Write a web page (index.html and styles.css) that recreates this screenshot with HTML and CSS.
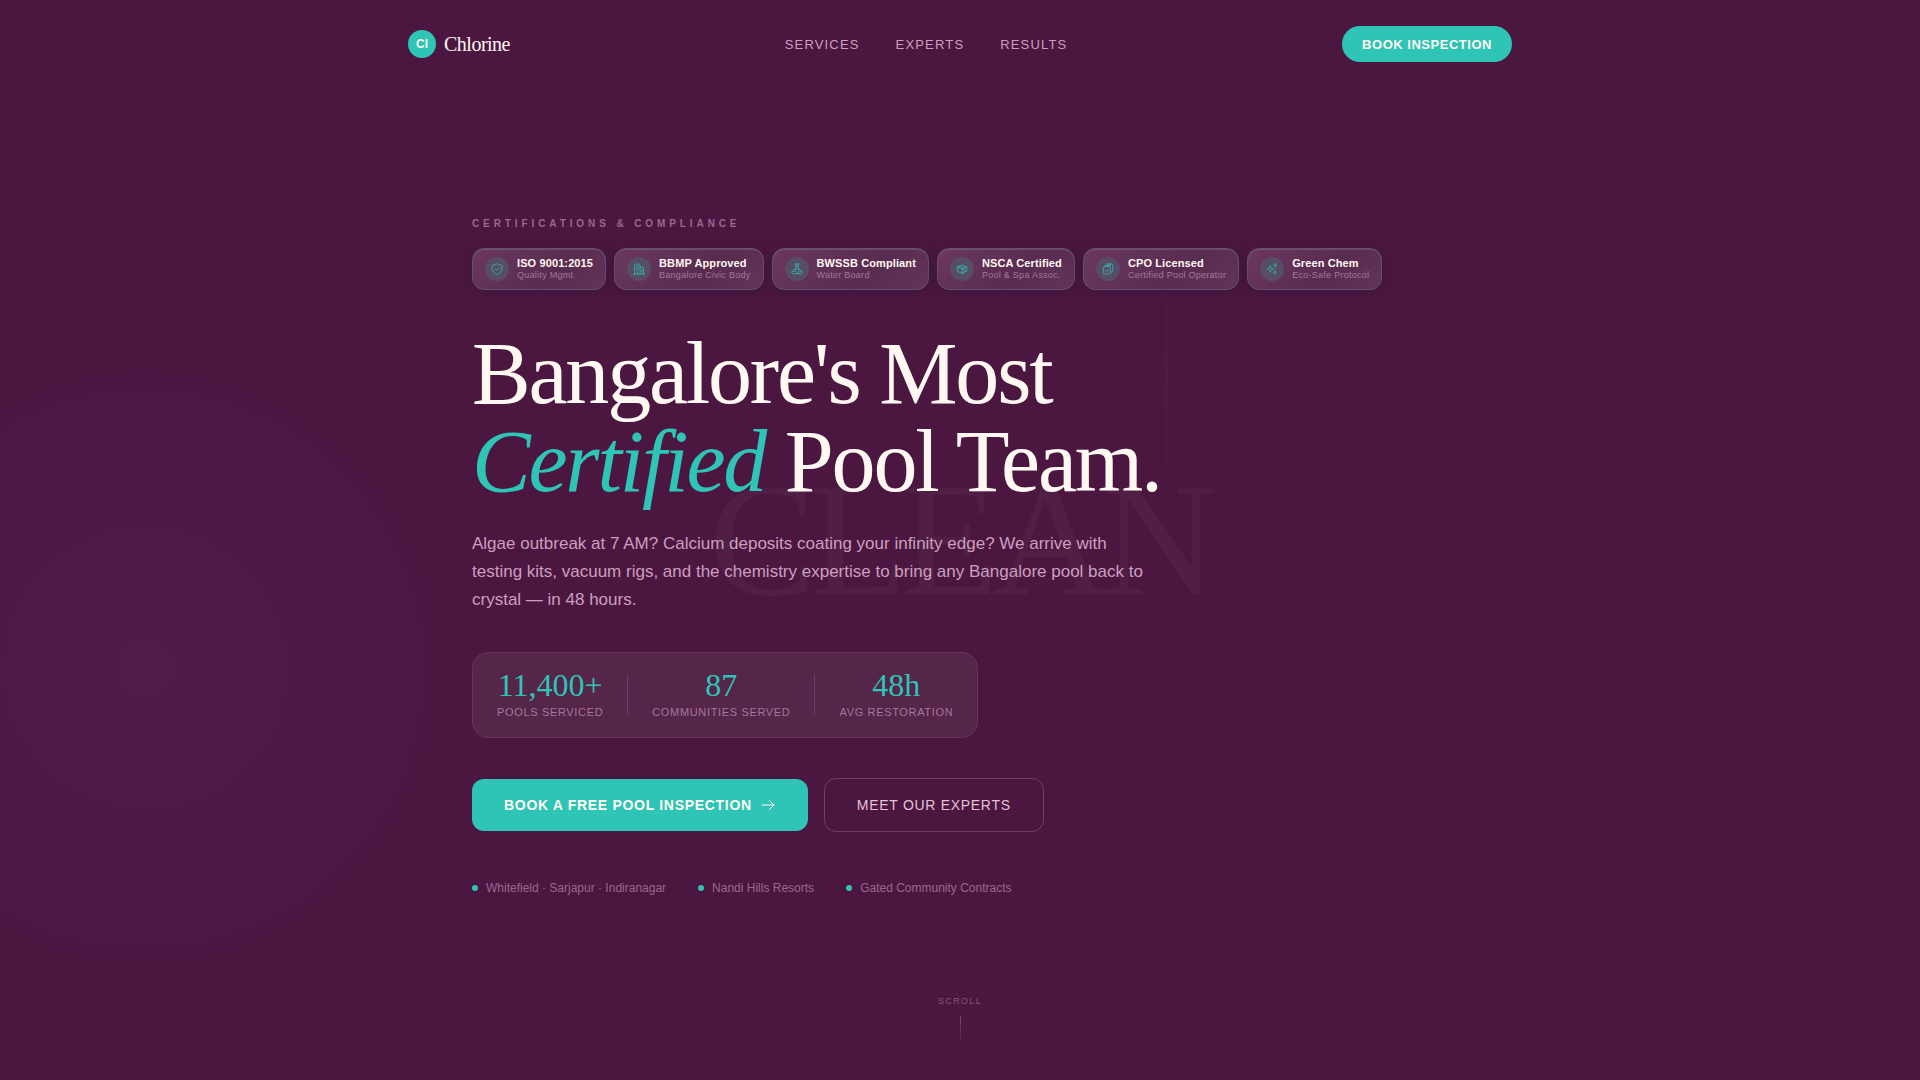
FILE: index.html
```html
<!DOCTYPE html>
<html lang="en">
<head>
<meta charset="utf-8">
<meta name="viewport" content="width=device-width, initial-scale=1">
<title>Chlorine — Certified Pool Team</title>
<link rel="stylesheet" href="styles.css">
</head>
<body>
<div class="page">
  <div class="glow" aria-hidden="true"></div>
  <div class="beam" aria-hidden="true"></div>
  <div class="watermark" aria-hidden="true">CLEAN</div>

  <header class="nav">
    <a class="brand" href="#"><span class="brand-mark">Cl</span><span class="brand-name">Chlorine</span></a>
    <nav class="nav-links">
      <a href="#services">Services</a>
      <a href="#experts">Experts</a>
      <a href="#results">Results</a>
    </nav>
    <button class="nav-cta" type="button">Book Inspection</button>
  </header>

  <main class="hero">
    <p class="eyebrow">Certifications &amp; Compliance</p>
    <ul class="badges">
      <li class="badge">
        <span class="badge-icon"><svg viewBox="0 0 24 24"><path d="M2 10.400c0-3.200 0-4.800.4-5.300.4-.6 2.300-1.100 5.200-2.100l.9-.2C10.400 2 11.200 1.500 12 1.500s1.600.5 3.500 1.300l.9.200c2.900 1 4.800 1.500 5.200 2.100.4.500.4 2.100.4 5.300v1.600c0 5.600-5 8.700-7.900 10-.7.300-1.100.5-2.100.5s-1.400-.2-2.100-.5C7 20.700 2 17.600 2 12z"/><path d="M8.500 12.500l2.300 2.300 4.900-5.300"/></svg></span>
        <span class="badge-text"><strong>ISO 9001:2015</strong><small>Quality Mgmt</small></span>
      </li>
      <li class="badge">
        <span class="badge-icon"><svg viewBox="0 0 24 24"><path d="M1 22h22M3 22V5c0-2 1-3 3-3h5c2 0 3 1 3 3v17M14 8h4c2 0 3 1 3 3v11M6.500 6h4M6.500 9.500h4M6.500 13h4M8.500 22v-5M17 12h1M17 15h1M17 18h1"/></svg></span>
        <span class="badge-text"><strong>BBMP Approved</strong><small>Bangalore Civic Body</small></span>
      </li>
      <li class="badge">
        <span class="badge-icon"><svg viewBox="0 0 24 24"><path d="M8 2h8M9.500 2v7.500L7 13M14.500 2v7.500L17 13M10 6.500h3"/><path d="M7 13c-3 1-5.500 3-5.500 5.500 0 2.200 1.500 3 4 3h13c2.500 0 4-.8 4-3C22.500 16 20 14 17 13zM4 17c3-2.500 6 1.500 9 1.500s4-2 7-1.500"/></svg></span>
        <span class="badge-text"><strong>BWSSB Compliant</strong><small>Water Board</small></span>
      </li>
      <li class="badge">
        <span class="badge-icon"><svg viewBox="0 0 24 24"><path d="M2.500 8.500 11 4l10.500 3.500L12.500 12zM2.500 8.500v8l9.500 4.500 9.500-5V7.500M12.500 12v9M6 6.500l10 4v3.500M16 17.500l3-1.500"/></svg></span>
        <span class="badge-text"><strong>NSCA Certified</strong><small>Pool &amp; Spa Assoc.</small></span>
      </li>
      <li class="badge">
        <span class="badge-icon"><svg viewBox="0 0 24 24"><rect x="2.500" y="7" width="14" height="15" rx="3"/><path d="M7 7V5c0-2 1-3 3-3h8.500c2 0 3 1 3 3v10c0 2-1 3-3 3h-2M11 2v3h6V2M6.500 15l2.200 2.200L13 12.500"/></svg></span>
        <span class="badge-text"><strong>CPO Licensed</strong><small>Certified Pool Operator</small></span>
      </li>
      <li class="badge">
        <span class="badge-icon"><svg viewBox="0 0 24 24"><path d="M8.500 6c1 4 2 5 6 6-4 1-5 2-6 6-1-4-2-5-6-6 4-1 5-2 6-6zM18.500 1.500c.5 2.300 1 3 3.500 3.500-2.500.5-3 1.200-3.500 3.500-.5-2.300-1-3-3.500-3.500 2.500-.5 3-1.200 3.500-3.500zM18 16c.5 2 1 2.500 3 3-2 .5-2.500 1-3 3-.5-2-1-2.500-3-3 2-.5 2.500-1 3-3z"/></svg></span>
        <span class="badge-text"><strong>Green Chem</strong><small>Eco-Safe Protocol</small></span>
      </li>
    </ul>

    <h1 class="headline">Bangalore's Most<br><em>Certified</em> Pool Team.</h1>
    <p class="lead">Algae outbreak at 7 AM? Calcium deposits coating your infinity edge? We arrive with testing kits, vacuum rigs, and the chemistry expertise to bring any Bangalore pool back to crystal — in 48 hours.</p>

    <dl class="stats">
      <div class="stat"><dt>Pools Serviced</dt><dd>11,400+</dd></div>
      <div class="stat"><dt>Communities Served</dt><dd>87</dd></div>
      <div class="stat"><dt>Avg Restoration</dt><dd>48h</dd></div>
    </dl>

    <div class="actions">
      <button class="btn btn-primary" type="button">Book a Free Pool Inspection
        <svg viewBox="0 0 24 24" aria-hidden="true"><path d="M3 12h18M14 5l7 7-7 7"/></svg></button>
      <button class="btn btn-outline" type="button">Meet Our Experts</button>
    </div>

    <ul class="areas">
      <li>Whitefield · Sarjapur · Indiranagar</li>
      <li>Nandi Hills Resorts</li>
      <li>Gated Community Contracts</li>
    </ul>
  </main>

  <div class="scroll-cue">Scroll</div>
</div>
</body>
</html>
```
FILE: styles.css
```css
:root {
  --plum: #4b1740;
  --teal: #2ec4b6;
  --cream: #fff8f0;
  --pink: #cb9fbf;
  --mauve: #9a678f;
  --sans: "Liberation Sans", Arial, sans-serif;
  --serif: "Liberation Serif", "Times New Roman", serif;
}

* { box-sizing: border-box; }

body {
  margin: 0;
  background: var(--plum);
  color: var(--cream);
  font-family: var(--sans);
}

h1, p, ul, dl, dd { margin: 0; padding: 0; }
ul { list-style: none; }
a { color: inherit; text-decoration: none; }
button { font-family: inherit; cursor: pointer; }
svg { fill: none; stroke: currentColor; stroke-linecap: round; stroke-linejoin: round; }

.page {
  position: relative;
  display: flex;
  flex-direction: column;
  min-height: 100vh;
  overflow: hidden;
}

.nav, .hero, .scroll-cue { position: relative; }

/* Background decoration */
.glow {
  position: absolute;
  left: -205px;
  top: 318px;
  width: 700px;
  height: 700px;
  border-radius: 50%;
  background: radial-gradient(closest-side, rgba(107, 45, 107, 0.22), rgba(92, 32, 100, 0.14) 55%, transparent);
}

.beam {
  position: absolute;
  left: 1166px;
  top: 216px;
  width: 1px;
  height: 324px;
  background: linear-gradient(transparent, rgba(107, 58, 95, 0.3), transparent);
}

.watermark {
  position: absolute;
  top: 50%;
  left: 50%;
  transform: translate(-50%, -50%);
  color: rgba(120, 84, 112, 0.13);
  font: 160px/1 var(--serif);
  letter-spacing: -0.04em;
}

/* Navigation */
.nav {
  display: flex;
  align-items: center;
  justify-content: space-between;
  width: 100%;
  max-width: 1152px;
  margin: 0 auto;
  padding: 26px 24px;
}

.brand { display: flex; align-items: center; gap: 8px; }

.brand-mark {
  display: grid;
  place-items: center;
  width: 28px;
  height: 28px;
  border-radius: 50%;
  background: var(--teal);
  font-size: 12px;
  font-weight: 700;
}

.brand-name { font: 20px/28px var(--serif); letter-spacing: -0.025em; }

.nav-links {
  display: flex;
  gap: 36px;
  color: var(--pink);
  font-size: 13px;
  letter-spacing: 0.09em;
  text-transform: uppercase;
}

.nav-cta {
  height: 36px;
  padding: 0 20px;
  border: 0;
  border-radius: 18px;
  background: var(--teal);
  color: var(--cream);
  font-size: 13px;
  font-weight: 700;
  letter-spacing: 0.04em;
  text-transform: uppercase;
}

/* Hero */
.hero {
  flex: 1;
  display: flex;
  flex-direction: column;
  justify-content: center;
  align-items: flex-start;
  width: 100%;
  max-width: 1104px;
  margin: 0 auto;
  padding: 30px 64px 0;
}

.eyebrow {
  margin-bottom: 16px;
  color: var(--mauve);
  font-size: 10px;
  font-weight: 700;
  line-height: 16px;
  letter-spacing: 0.39em;
  text-transform: uppercase;
}

.badges { display: flex; flex-wrap: wrap; gap: 8px; margin-bottom: 40px; }

.badge {
  display: flex;
  align-items: center;
  gap: 8px;
  padding: 8px 12px;
  border: 1px solid #5d5270;
  border-radius: 12px;
  background: linear-gradient(135deg, #6b385e, #5a2b51 60%, #633459);
  box-shadow: 0 2px 12px rgba(46, 20, 60, 0.35), inset 0 1px 0 rgba(255, 255, 255, 0.12);
}

.badge-icon {
  display: grid;
  place-items: center;
  width: 24px;
  height: 24px;
  border-radius: 50%;
  background: #574d67;
  color: var(--teal);
}

.badge-icon svg { width: 12px; height: 12px; stroke-width: 1.5; }
.badge-text { display: flex; flex-direction: column; white-space: nowrap; }
.badge-text strong { font-size: 11px; line-height: 12px; letter-spacing: 0.01em; }
.badge-text small { color: #a5779b; font-size: 9px; line-height: 12px; letter-spacing: 0.03em; }

.headline {
  margin-bottom: 24px;
  font: 88px/88px var(--serif);
  letter-spacing: -0.025em;
}

.headline em { color: var(--teal); }

.lead {
  max-width: 672px;
  margin-bottom: 38px;
  color: var(--pink);
  font-size: 17px;
  line-height: 28px;
}

.stats {
  display: flex;
  align-items: center;
  margin-bottom: 40px;
  padding: 16px 0 18px;
  border: 1px solid #653459;
  border-radius: 16px;
  background: #55254a;
}

.stat {
  position: relative;
  display: flex;
  flex-direction: column-reverse;
  gap: 4px;
  padding: 0 24px;
  text-align: center;
}

.stat + .stat { margin-left: 1px; }

.stat + .stat::before {
  content: "";
  position: absolute;
  left: -1px;
  top: 6px;
  width: 1px;
  height: 40px;
  background: #6e3f64;
}

.stat dt {
  color: #a5779b;
  font-size: 11px;
  line-height: 14px;
  letter-spacing: 0.06em;
  text-transform: uppercase;
}

.stat dd { color: var(--teal); font: 32px/32px var(--serif); }

.actions { display: flex; flex-wrap: wrap; align-items: center; gap: 16px; margin-bottom: 48px; }

.btn {
  display: flex;
  align-items: center;
  gap: 8px;
  height: 52px;
  padding: 0 32px;
  border: 0;
  border-radius: 12px;
  font-size: 14px;
  letter-spacing: 0.05em;
  text-transform: uppercase;
}

.btn svg { width: 16px; height: 16px; stroke-width: 1.5; }
.btn-primary { background: var(--teal); color: var(--cream); font-weight: 700; }
.btn-outline { height: 54px; border: 1px solid #753c6b; background: transparent; color: #e3c1d9; }

.areas {
  display: flex;
  flex-wrap: wrap;
  gap: 32px;
  color: var(--mauve);
  font-size: 12px;
  line-height: 16px;
}

.areas li { display: flex; align-items: center; gap: 8px; }

.areas li::before {
  content: "";
  width: 6px;
  height: 6px;
  border-radius: 50%;
  background: var(--teal);
}

.scroll-cue {
  display: flex;
  flex-direction: column;
  align-items: center;
  gap: 8px;
  padding-bottom: 36px;
  color: #875280;
  font-size: 9px;
  line-height: 14px;
  letter-spacing: 0.15em;
  text-transform: uppercase;
}

.scroll-cue::after {
  content: "";
  width: 1px;
  height: 28px;
  background: linear-gradient(#7d4a75, transparent);
}
```
